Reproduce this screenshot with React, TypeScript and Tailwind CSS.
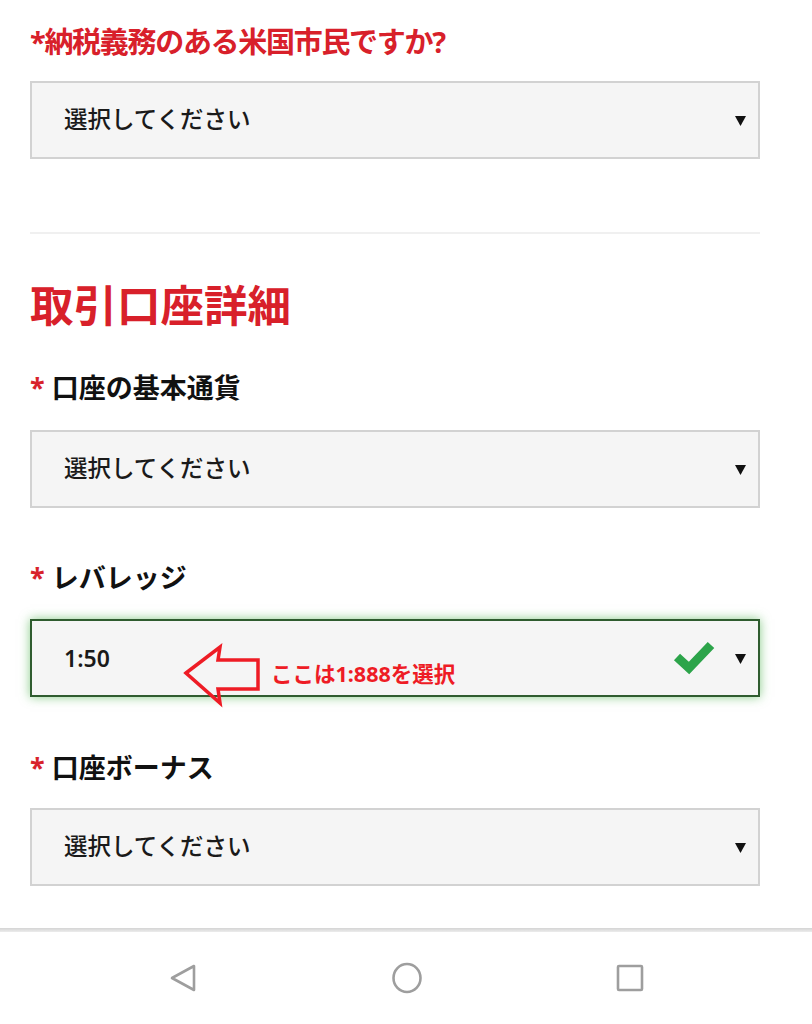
import React from "react";

const FONT = { fontFamily: '"Noto Sans", "Noto Sans CJK JP", sans-serif' };

function Caret() {
  return (
    <svg width="11" height="11" viewBox="0 0 10 10" className="shrink-0">
      <polygon points="0,1 10,1 5,10" fill="#111" />
    </svg>
  );
}

function Select({ value, valid, children }: { value: string; valid?: boolean; children?: React.ReactNode }) {
  return (
    <div
      className={
        "relative flex h-[78px] items-center bg-[#f5f5f5] pl-[32px] pr-[12px] " +
        (valid
          ? "border-2 border-[#2f5c2f] shadow-[0_0_10px_rgba(60,170,60,0.6)]"
          : "border-2 border-[#d2d2d2]")
      }
    >
      <span
        className={
          "flex-1 text-[#1a1a1a] " + (valid ? "text-[23px] font-semibold" : "text-[23.5px] font-medium")
        }
      >
        {value}
      </span>
      {valid && (
        <svg width="44" height="36" viewBox="0 0 44 36" className="mr-[18px]">
          <polyline points="4,17 16,28 38,5" fill="none" stroke="#2ca44a" strokeWidth="9" strokeLinejoin="miter" strokeLinecap="butt" />
        </svg>
      )}
      <Caret />
      {children}
    </div>
  );
}

function Label({ text, mt }: { text: string; mt: string }) {
  return (
    <div className={"flex h-[36px] items-center text-[27px] font-bold leading-[36px] text-[#111] " + mt}>
      <span className="mr-[7px] text-[#d8232a]">*</span>
      <span>{text}</span>
    </div>
  );
}

export default function App() {
  return (
    <div className="flex h-[1024px] w-[812px] flex-col overflow-hidden bg-white" style={FONT}>
      <div className="flex-1 pl-[30px] pr-[52px]">
        <div className="mt-[22px] h-[40px] text-[29px] font-bold leading-[40px] tracking-[-1.3px] text-[#d8202a]">
          *納税義務のある米国市民ですか?
        </div>
        <div className="mt-[19px]">
          <Select value="選択してください" />
        </div>
        <div className="mt-[73px] h-[2px] bg-[#f0f0f0]" />
        <div className="mt-[43px] h-[56px] text-[43.5px] font-bold leading-[56px] text-[#d8202a]">
          取引口座詳細
        </div>
        <Label text="口座の基本通貨" mt="mt-[37px]" />
        <div className="mt-[24px]">
          <Select value="選択してください" />
        </div>
        <Label text="レバレッジ" mt="mt-[52px]" />
        <div className="mt-[23px]">
          <Select value="1:50" valid>
            <div className="pointer-events-none absolute left-[151px] top-[24px] flex items-center">
              <svg width="80" height="62" viewBox="0 0 80 62" className="overflow-visible">
                <polygon
                  points="3,28 37,2 35,15 75,15 75,44 35,44 37,58"
                  fill="none"
                  stroke="#ee1c25"
                  strokeWidth="3.5"
                  strokeLinejoin="miter"
                />
              </svg>
              <span className="ml-[8px] mt-[-4px] text-[21.5px] font-bold text-[#ee1c25]">ここは1:888を選択</span>
            </div>
          </Select>
        </div>
        <Label text="口座ボーナス" mt="mt-[53px]" />
        <div className="mt-[22px]">
          <Select value="選択してください" />
        </div>
      </div>
      <div className="relative h-[96px] shrink-0 bg-white">
        <div className="h-[4px] bg-gradient-to-b from-[#d4d4d4] to-[#ececec]" />
        <div className="flex h-[92px] items-center justify-between pl-[169px] pr-[168px]">
          <svg width="28" height="28" viewBox="0 0 28 28">
            <polygon points="25,2 25,26 3,14" fill="none" stroke="#9e9e9e" strokeWidth="2.6" strokeLinejoin="round" />
          </svg>
          <svg width="32" height="32" viewBox="0 0 32 32">
            <ellipse cx="16" cy="16" rx="13.5" ry="14" fill="none" stroke="#9e9e9e" strokeWidth="2.6" />
          </svg>
          <svg width="28" height="28" viewBox="0 0 28 28">
            <rect x="2" y="2" width="24" height="24" rx="1" fill="none" stroke="#9e9e9e" strokeWidth="2.6" />
          </svg>
        </div>
      </div>
    </div>
  );
}
